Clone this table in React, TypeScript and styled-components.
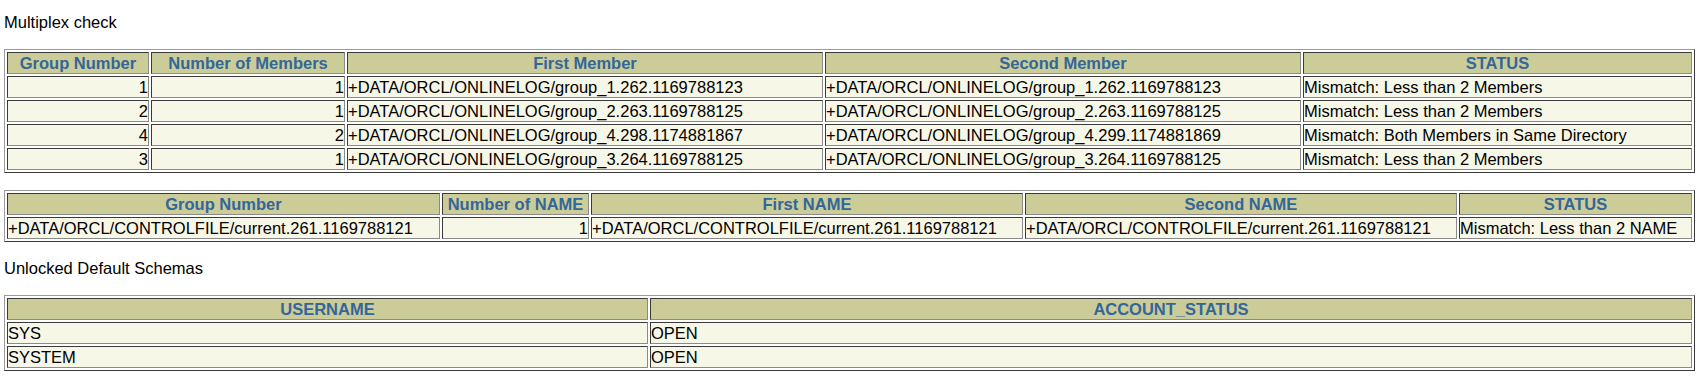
import React from "react";
import styled, { createGlobalStyle } from "styled-components";

const GlobalStyle = createGlobalStyle`
  html, body {
    margin: 0;
    padding: 0;
    background: #ffffff;
  }
  body {
    font-family: "Liberation Sans", Arial, Helvetica, sans-serif;
    font-size: 16.5px;
    color: #000000;
  }
`;

const Page = styled.div`
  display: flex;
  flex-direction: column;
  align-items: flex-start;
  gap: 17px;
  padding: 13px 0 0 4px;
`;

const Caption = styled.p`
  margin: 0;
  font-family: "Liberation Sans", Arial, Helvetica, sans-serif;
  font-size: 16.5px;
  line-height: 19px;
  color: #000000;
`;

const ReportTable = styled.table`
  width: 1691px;
  table-layout: fixed;
  border-collapse: separate;
  border-spacing: 2px;
  border: 1px solid;
  border-color: #9a9a9a #3a3a3a #3a3a3a #9a9a9a;
  background: #ffffff;
  font-family: "Liberation Sans", Arial, Helvetica, sans-serif;
  font-size: 16.5px;
`;

const HeaderCell = styled.th<{ $width?: number }>`
  box-sizing: border-box;
  width: ${(p) => (p.$width ? `${p.$width}px` : "auto")};
  height: 22px;
  padding: 0;
  border: 1px solid;
  border-color: #3a3a3a #8a8a8a #8a8a8a #3a3a3a;
  background: #cccc99;
  color: #336699;
  font-weight: bold;
  line-height: 20px;
  text-align: center;
  white-space: nowrap;
  overflow: hidden;
`;

const DataCell = styled.td<{ $align?: "left" | "right" }>`
  box-sizing: border-box;
  height: 22px;
  padding: 0;
  border: 1px solid;
  border-color: #3a3a3a #8a8a8a #8a8a8a #3a3a3a;
  background: #f7f7e7;
  color: #000000;
  line-height: 20px;
  text-align: ${(p) => p.$align ?? "left"};
  white-space: nowrap;
  overflow: hidden;
`;

type Col = { label: string; width?: number; align?: "left" | "right" };

type TableSpec = { cols: Col[]; rows: string[][] };

const multiplex: TableSpec = {
  cols: [
    { label: "Group Number", width: 142, align: "right" },
    { label: "Number of Members", width: 194, align: "right" },
    { label: "First Member", width: 476 },
    { label: "Second Member", width: 476 },
    { label: "STATUS" },
  ],
  rows: [
    [
      "1",
      "1",
      "+DATA/ORCL/ONLINELOG/group_1.262.1169788123",
      "+DATA/ORCL/ONLINELOG/group_1.262.1169788123",
      "Mismatch: Less than 2 Members",
    ],
    [
      "2",
      "1",
      "+DATA/ORCL/ONLINELOG/group_2.263.1169788125",
      "+DATA/ORCL/ONLINELOG/group_2.263.1169788125",
      "Mismatch: Less than 2 Members",
    ],
    [
      "4",
      "2",
      "+DATA/ORCL/ONLINELOG/group_4.298.1174881867",
      "+DATA/ORCL/ONLINELOG/group_4.299.1174881869",
      "Mismatch: Both Members in Same Directory",
    ],
    [
      "3",
      "1",
      "+DATA/ORCL/ONLINELOG/group_3.264.1169788125",
      "+DATA/ORCL/ONLINELOG/group_3.264.1169788125",
      "Mismatch: Less than 2 Members",
    ],
  ],
};

const controlFiles: TableSpec = {
  cols: [
    { label: "Group Number", width: 433 },
    { label: "Number of NAME", width: 147, align: "right" },
    { label: "First NAME", width: 432 },
    { label: "Second NAME", width: 432 },
    { label: "STATUS" },
  ],
  rows: [
    [
      "+DATA/ORCL/CONTROLFILE/current.261.1169788121",
      "1",
      "+DATA/ORCL/CONTROLFILE/current.261.1169788121",
      "+DATA/ORCL/CONTROLFILE/current.261.1169788121",
      "Mismatch: Less than 2 NAME",
    ],
  ],
};

const schemas: TableSpec = {
  cols: [{ label: "USERNAME", width: 641 }, { label: "ACCOUNT_STATUS" }],
  rows: [
    ["SYS", "OPEN"],
    ["SYSTEM", "OPEN"],
  ],
};

function Report({ spec }: { spec: TableSpec }) {
  return (
    <ReportTable>
      <thead>
        <tr>
          {spec.cols.map((c) => (
            <HeaderCell key={c.label} $width={c.width}>
              {c.label}
            </HeaderCell>
          ))}
        </tr>
      </thead>
      <tbody>
        {spec.rows.map((row, i) => (
          <tr key={i}>
            {row.map((v, j) => (
              <DataCell key={j} $align={spec.cols[j].align}>
                {v}
              </DataCell>
            ))}
          </tr>
        ))}
      </tbody>
    </ReportTable>
  );
}

export default function App() {
  return (
    <>
      <GlobalStyle />
      <Page>
        <Caption>Multiplex check</Caption>
        <Report spec={multiplex} />
        <Report spec={controlFiles} />
        <Caption>Unlocked Default Schemas</Caption>
        <Report spec={schemas} />
      </Page>
    </>
  );
}
